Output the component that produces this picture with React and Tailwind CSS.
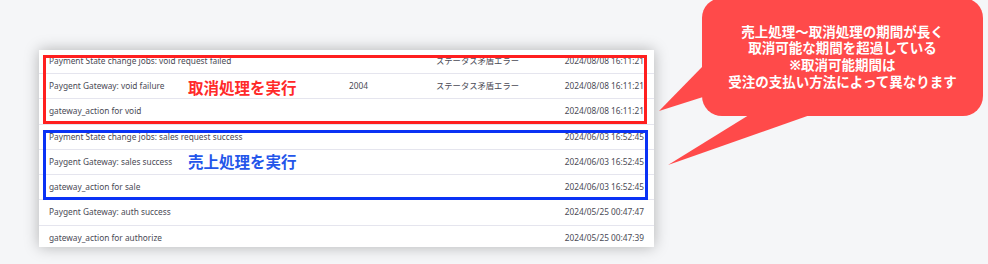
import React from "react";

// Order log excerpt with hand-drawn annotations (boxes, labels, speech bubble).

const rows = [
  { msg: "Payment State change jobs: void request failed", code: "", status: "ステータス矛盾エラー", at: "2024/08/08 16:11:21", h: "h-[24px]" },
  { msg: "Paygent Gateway: void failure", code: "2004", status: "ステータス矛盾エラー", at: "2024/08/08 16:11:21" },
  { msg: "gateway_action for void", code: "", status: "", at: "2024/08/08 16:11:21" },
  { msg: "Payment State change jobs: sales request success", code: "", status: "", at: "2024/06/03 16:52:45" },
  { msg: "Paygent Gateway: sales success", code: "", status: "", at: "2024/06/03 16:52:45" },
  { msg: "gateway_action for sale", code: "", status: "", at: "2024/06/03 16:52:45" },
  { msg: "Paygent Gateway: auth success", code: "", status: "", at: "2024/05/25 00:47:47" },
  { msg: "gateway_action for authorize", code: "", status: "", at: "2024/05/25 00:47:39" },
];

const jp = { fontFamily: '"Noto Sans", "Noto Sans CJK JP", sans-serif' };

function LogRow({ row, last }) {
  return (
    <div
      className={`grid grid-cols-[300px_87px_1fr_auto] items-center px-[10px] text-[8.3px] text-[#4a4a55] ${
        row.h || "h-[25.3px]"
      } ${last ? "" : "border-b border-[#e5e5ee]"}`}
    >
      <span>{row.msg}</span>
      <span>{row.code}</span>
      <span>{row.status}</span>
      <span className="text-right">{row.at}</span>
    </div>
  );
}

function Bubble() {
  return (
    <div className="absolute left-[655px] top-[-2px] h-[170px] w-[333px]">
      <svg className="absolute inset-0" width="333" height="170" viewBox="655 -2 333 170">
        <polygon points="703,66 659,111 703,97" fill="#ff4a4a" />
        <polygon points="757,110 668,165 830,108" fill="#ff4a4a" />
      </svg>
      <div className="absolute left-[47px] top-0 flex h-[118px] w-[281px] items-center justify-center rounded-[20px] bg-[#ff4a4a]">
        <p className="text-center text-[13.5px] font-bold leading-[16.6px] text-white">
          売上処理〜取消処理の期間が長く
          <br />
          取消可能な期間を超過している
          <br />
          ※取消可能期間は
          <br />
          受注の支払い方法によって異なります
        </p>
      </div>
    </div>
  );
}

export default function App() {
  return (
    <div className="relative h-[264px] w-[988px] overflow-hidden bg-[#f5f6f8]" style={jp}>
      <div className="ml-[39px] mt-[50px] h-[197px] w-[615px] overflow-hidden bg-white shadow-[0_0_14px_rgba(0,0,0,0.28)]">
        <div className="relative">
          {rows.map((r, i) => (
            <LogRow key={i} row={r} last={i === rows.length - 1} />
          ))}

          <div className="absolute left-[4px] top-[5px] h-[69px] w-[604px] border-[3px] border-[#ff1f1f]" />
          <div className="absolute left-[4px] top-[80px] h-[70px] w-[605px] border-[3px] border-[#0a32f5]" />

          <span className="absolute left-[149px] top-[27px] text-[15.5px] font-bold text-[#ff2a2a]">
            取消処理を実行
          </span>
          <span className="absolute left-[149px] top-[101px] text-[15.5px] font-bold text-[#2456ea]">
            売上処理を実行
          </span>
        </div>
      </div>
      <Bubble />
    </div>
  );
}
